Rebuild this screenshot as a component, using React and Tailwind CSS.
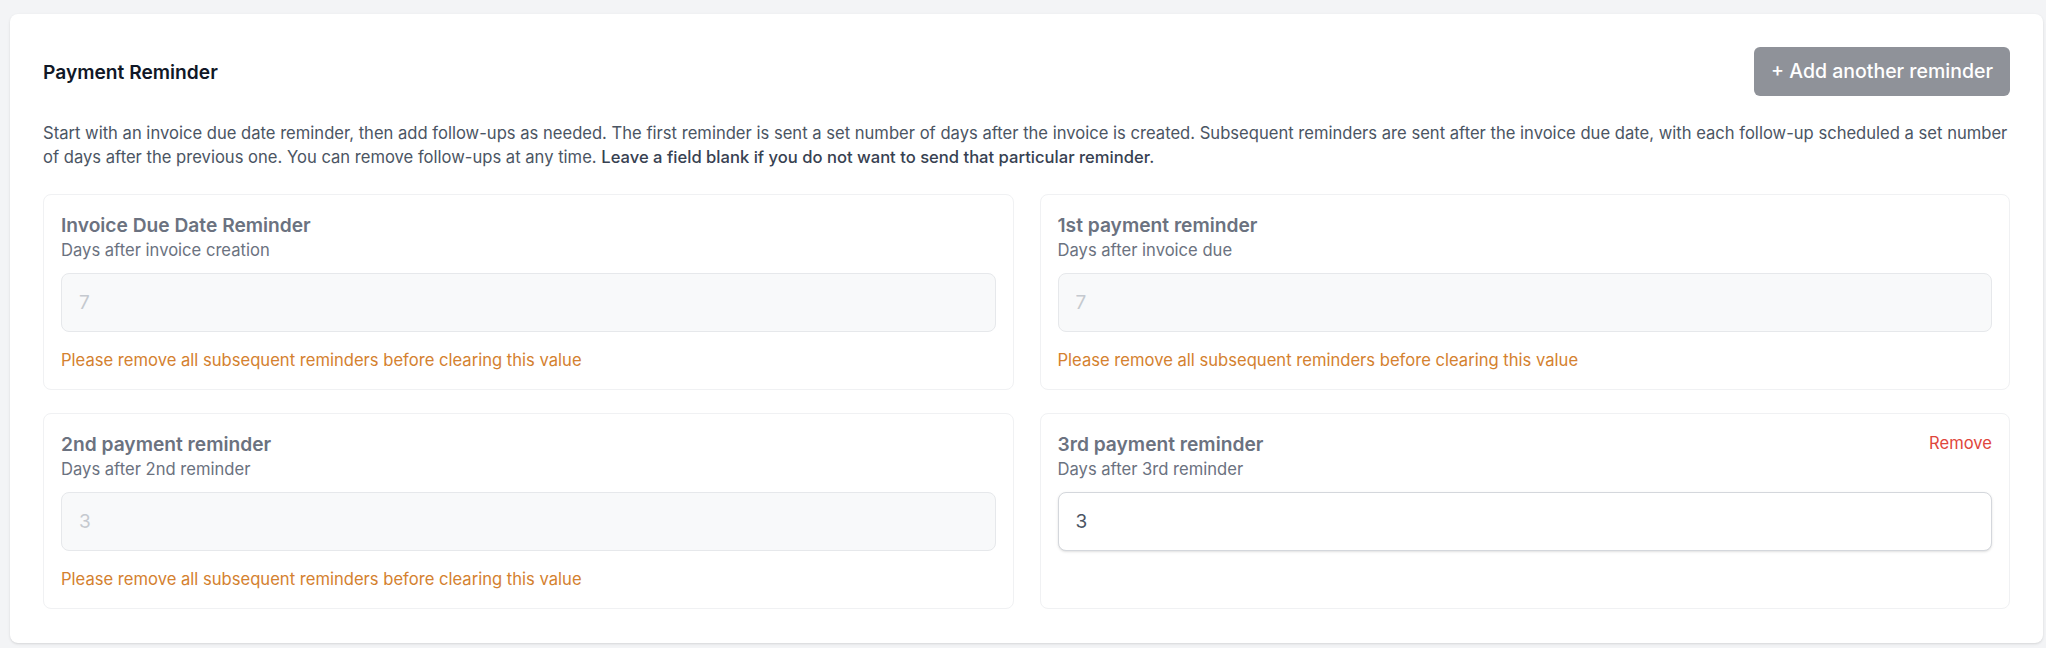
import React from 'react';

const reminders = [
    { title: 'Invoice Due Date Reminder', hint: 'Days after invoice creation', value: '7', locked: true },
    { title: '1st payment reminder', hint: 'Days after invoice due', value: '7', locked: true },
    { title: '2nd payment reminder', hint: 'Days after 2nd reminder', value: '3', locked: true },
    { title: '3rd payment reminder', hint: 'Days after 3rd reminder', value: '3', locked: false, removable: true },
];

const ReminderCard = ({ title, hint, value, locked, removable }) => (
    <div className="bg-white rounded-lg border border-[#f0f1f3] p-[17px]">
        <div className="flex items-start justify-between">
            <h3 className="text-[19.2px] leading-[26px] font-semibold text-[#6b7280]">{title}</h3>
            {removable && (
                <button className="text-[16.6px] leading-[24px] text-[#e0463c]">Remove</button>
            )}
        </div>
        <p className="text-[16.6px] leading-[24px] text-[#6b7280]">{hint}</p>
        <input
            type="text"
            disabled={locked}
            defaultValue={value}
            className={`mt-[11px] w-full h-[59px] px-[17px] rounded-lg border text-[19px] outline-none ${locked ? 'bg-[#f8f9fa] border-[#e6e8eb] text-[#c5c9cf]' : 'bg-white border-[#d4d7dc] text-[#4b5563] shadow-sm'}`}
        />
        {locked && (
            <p className="mt-[16px] text-[16.6px] leading-[24px] text-[#d4812f]">
                Please remove all subsequent reminders before clearing this value
            </p>
        )}
    </div>
);

const App = () => {
    return (
        <div className="min-h-screen bg-[#f3f4f6] pt-[14px] pl-[10px] pr-[3px] pb-[6px]" style={{ fontFamily: 'Inter, "Noto Sans", sans-serif' }}>
            <div className="bg-white rounded-lg shadow-sm px-[33px] pt-[33px] pb-[34px]">
                <div className="flex items-center justify-between">
                    <h2 className="text-[19.2px] leading-[26px] font-semibold text-[#111827]">Payment Reminder</h2>
                    <button className="h-[49px] px-[17px] rounded-md bg-[#8f9299] text-white text-[19.5px] font-medium">
                        + Add another reminder
                    </button>
                </div>

                <p className="mt-[25px] text-[16.6px] leading-[24px] text-[#4b5563]">
                    Start with an invoice due date reminder, then add follow-ups as needed. The first reminder is sent a set number of days after the invoice is created. Subsequent reminders are sent after the invoice due date, with each follow-up scheduled a set number of days after the previous one. You can remove follow-ups at any time.{' '}
                    <span className="font-medium text-[#374151]">Leave a field blank if you do not want to send that particular reminder.</span>
                </p>

                <div className="mt-[25px] grid grid-cols-2 gap-x-[26px] gap-y-[23px]">
                    {reminders.map((r) => (
                        <ReminderCard key={r.title} {...r} />
                    ))}
                </div>
            </div>
        </div>
    );
};

export default App;
